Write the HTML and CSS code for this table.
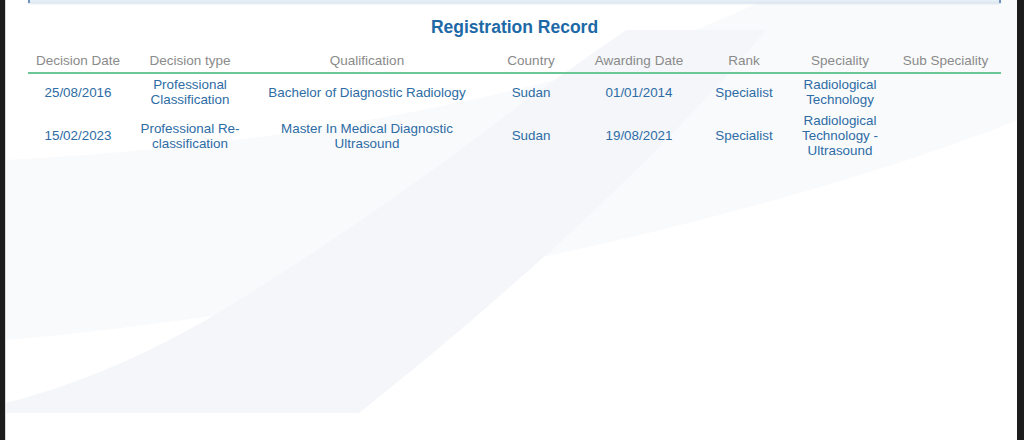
FILE: index.html
```html
<!DOCTYPE html>
<html lang="en">
<head>
<meta charset="utf-8">
<title>Registration Record</title>
<link rel="stylesheet" href="styles.css">
</head>
<body>
<div class="page">
  <svg class="bg" width="1012" height="440" viewBox="0 0 1012 440" aria-hidden="true">
    <path d="M0,160 C200,150 420,120 620,60 L760,0 L1012,0 L1012,120 C860,180 640,240 420,280 C260,310 120,330 0,340 Z" fill="#f9fafc"/>
    <path d="M0,403 C90,380 170,340 233,300 C330,240 430,170 520,100 L620,30 L760,30 C660,150 520,280 353,413 L0,413 Z" fill="#f4f6f9"/>
    <path d="M760,30 L1012,10 L1012,120 C900,160 800,190 700,210 Z" fill="#f9fafc"/>
  </svg>
  <div class="content">
    <div class="topbar"></div>
    <h1 class="title">Registration Record</h1>
    <table class="record">
      <colgroup>
        <col class="c1"><col class="c2"><col class="c3"><col class="c4">
        <col class="c5"><col class="c6"><col class="c7"><col class="c8">
      </colgroup>
      <thead>
        <tr>
          <th>Decision Date</th>
          <th>Decision type</th>
          <th>Qualification</th>
          <th>Country</th>
          <th>Awarding Date</th>
          <th>Rank</th>
          <th>Speciality</th>
          <th>Sub Speciality</th>
        </tr>
      </thead>
      <tbody>
        <tr>
          <td>25/08/2016</td>
          <td>Professional Classification</td>
          <td>Bachelor of Diagnostic Radiology</td>
          <td>Sudan</td>
          <td>01/01/2014</td>
          <td>Specialist</td>
          <td>Radiological Technology</td>
          <td></td>
        </tr>
        <tr>
          <td>15/02/2023</td>
          <td>Professional Re-classification</td>
          <td>Master In Medical Diagnostic Ultrasound</td>
          <td>Sudan</td>
          <td>19/08/2021</td>
          <td>Specialist</td>
          <td>Radiological Technology - Ultrasound</td>
          <td></td>
        </tr>
      </tbody>
    </table>
  </div>
</div>
</body>
</html>
```

FILE: styles.css
```css
html, body {
  margin: 0;
  padding: 0;
  background: #1c1c1d;
}

body {
  width: 1024px;
  height: 440px;
  overflow: hidden;
  font-family: "Liberation Sans", Arial, sans-serif;
}

.page {
  position: relative;
  margin: 0 7px 0 5px;
  height: 440px;
  background: #ffffff;
  overflow: hidden;
  border-left: 1px solid #d8d8d8;
}

.bg {
  position: absolute;
  left: 0;
  top: 0;
  z-index: 0;
}

.content {
  position: relative;
  z-index: 1;
  margin: 0 16px 0 22px;
}

.topbar {
  height: 3px;
  background: linear-gradient(#e9f0f7, #dce7f2);
  border-left: 2px solid #6f93bb;
  border-right: 2px solid #6f93bb;
  box-shadow: 0 1px 2px rgba(120, 150, 190, 0.25);
}

.title {
  margin: 13px 0 0;
  font-size: 17.5px;
  line-height: 22px;
  font-weight: bold;
  color: #1d69a6;
  text-align: center;
}

.record {
  margin-top: 12px;
  width: 100%;
  border-collapse: collapse;
  table-layout: fixed;
}

.c1 { width: 100px; }
.c2 { width: 124px; }
.c3 { width: 230px; }
.c4 { width: 98px; }
.c5 { width: 118px; }
.c6 { width: 92px; }
.c7 { width: 100px; }
.c8 { width: auto; }

.record th {
  font-weight: normal;
  font-size: 13.5px;
  line-height: 15px;
  color: #8a8a8a;
  padding: 3px 4px 4px;
  text-align: center;
  border-bottom: 2px solid #6cc796;
  white-space: nowrap;
}

.record td {
  font-size: 13.4px;
  line-height: 15px;
  color: #2d6ca5;
  padding: 3px 6px;
  text-align: center;
  vertical-align: middle;
}
```
